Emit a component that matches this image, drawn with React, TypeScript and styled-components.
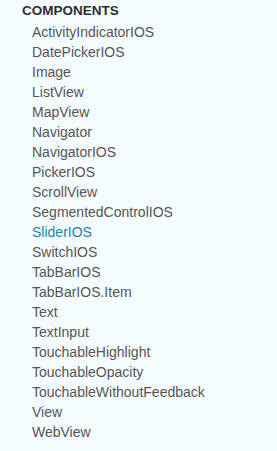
import React from "react";
import styled, { createGlobalStyle } from "styled-components";

const Global = createGlobalStyle`
  html, body { margin: 0; padding: 0; background: #f5fcff; }
  body { font-family: "Liberation Sans", Arial, sans-serif; }
`;

const Nav = styled.nav`
  padding: 2px 0 0 22px;
  width: 277px;
  box-sizing: border-box;
`;

const Heading = styled.h3`
  margin: 0;
  font-size: 13.5px;
  line-height: 18px;
  font-weight: 700;
  color: #2d2d2d;
`;

const List = styled.ul`
  list-style: none;
  margin: 2px 0 0;
  padding: 0 0 0 10px;
`;

const Item = styled.li<{ $active?: boolean }>`
  font-size: 14px;
  line-height: 20px;
  color: ${(p) => (p.$active ? "#1d82a6" : "#555555")};
`;

const items = [
  "ActivityIndicatorIOS",
  "DatePickerIOS",
  "Image",
  "ListView",
  "MapView",
  "Navigator",
  "NavigatorIOS",
  "PickerIOS",
  "ScrollView",
  "SegmentedControlIOS",
  "SliderIOS",
  "SwitchIOS",
  "TabBarIOS",
  "TabBarIOS.Item",
  "Text",
  "TextInput",
  "TouchableHighlight",
  "TouchableOpacity",
  "TouchableWithoutFeedback",
  "View",
  "WebView",
];

export default function App() {
  return (
    <>
      <Global />
      <Nav>
        <Heading>COMPONENTS</Heading>
        <List>
          {items.map((i) => (
            <Item key={i} $active={i === "SliderIOS"}>
              {i}
            </Item>
          ))}
        </List>
      </Nav>
    </>
  );
}
